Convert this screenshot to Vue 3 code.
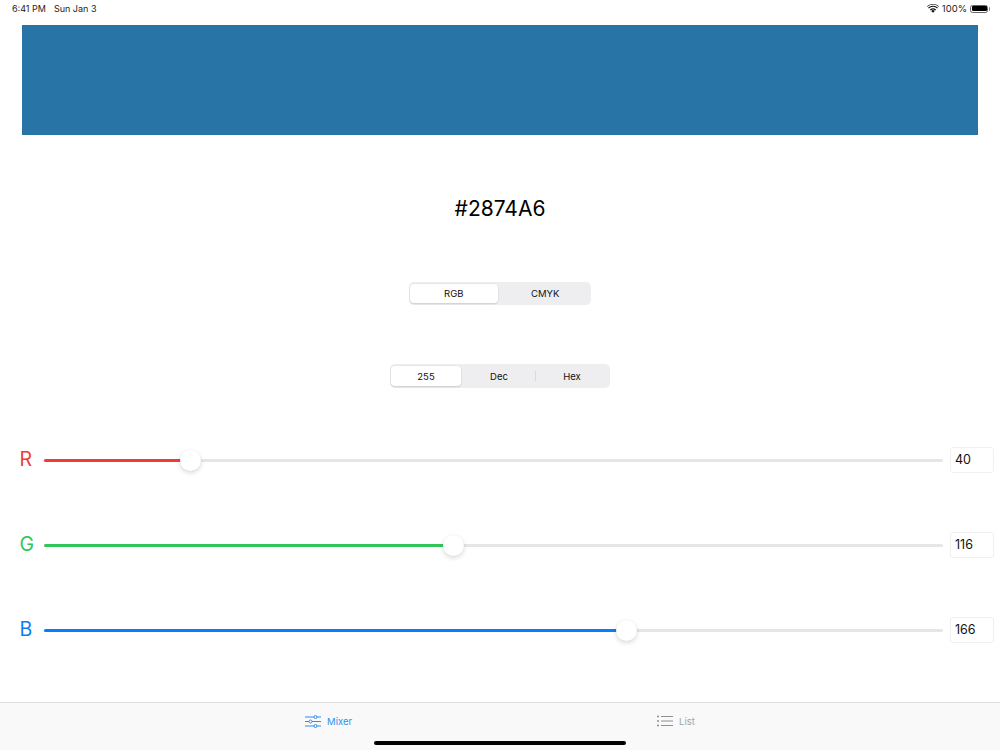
<script setup>
const channels = [
  { name: 'R', value: 40, color: '#f03c37' },
  { name: 'G', value: 116, color: '#34c55a' },
  { name: 'B', value: 166, color: '#0a7cf8' }
]
const fill = (v) => 8.6 + (v / 255) * 882 + 'px'
</script>

<template>
  <div class="page">
    <header class="status">
      <span class="time">6:41 PM</span>
      <span class="date">Sun Jan 3</span>
      <span class="spacer"></span>
      <svg class="wifi" width="12" height="9" viewBox="0 0 12 9">
        <path d="M6 8.8 4.200 6.900a2.600 2.600 0 0 1 3.600 0Z" fill="#111" />
        <path d="M2.900 5.600a4.600 4.600 0 0 1 6.200 0l-.8.8a3.500 3.500 0 0 0-4.600 0Z" fill="#111" />
        <path d="M1 3.700a7.300 7.300 0 0 1 10 0l-.8.8a6.200 6.200 0 0 0-8.400 0Z" fill="#111" />
        <path d="M0 2.300a8.800 8.800 0 0 1 12 0l-.5.5a8 8 0 0 0-11 0Z" fill="#111" />
      </svg>
      <span class="pct">100%</span>
      <span class="battery"><i></i></span>
    </header>

    <div class="swatch"></div>
    <div class="hex">#2874A6</div>

    <div class="seg seg-a">
      <span class="on">RGB</span>
      <span>CMYK</span>
    </div>
    <div class="seg seg-b">
      <span class="on">255</span>
      <span>Dec</span>
      <em></em>
      <span>Hex</span>
    </div>

    <section class="sliders">
      <div v-for="c in channels" :key="c.name" class="row">
        <span class="label" :style="{ color: c.color }">{{ c.name }}</span>
        <div class="track">
          <div class="fill" :style="{ width: fill(c.value), background: c.color }"></div>
          <div class="thumb" :style="{ left: fill(c.value) }"></div>
        </div>
        <div class="num">{{ c.value }}</div>
      </div>
    </section>

    <footer class="tabs">
      <div class="tab active">
        <svg width="16" height="13" viewBox="0 0 16 13" fill="none" stroke="#2e90ea" stroke-width="1">
          <path d="M0 2h16M0 6.500h16M0 11h16" />
          <circle cx="10.500" cy="2" r="1.500" fill="#fff" />
          <circle cx="5.500" cy="6.500" r="1.500" fill="#fff" />
          <circle cx="10.500" cy="11" r="1.500" fill="#fff" />
        </svg>
        <span>Mixer</span>
      </div>
      <div class="tab">
        <svg width="16" height="12" viewBox="0 0 16 12" fill="none" stroke="#8e8e93" stroke-width="1">
          <path d="M4 1.500h12M4 6h12M4 10.500h12" />
          <path d="M0 1.500h2M0 6h2M0 10.500h2" stroke-width="1.600" />
        </svg>
        <span>List</span>
      </div>
      <div class="home"></div>
    </footer>
  </div>
</template>

<style scoped>
.page {
  position: relative;
  width: 1000px;
  height: 750px;
  overflow: hidden;
  background: #fff;
  display: flex;
  flex-direction: column;
  font-family: Inter, "Liberation Sans", sans-serif;
  color: #111;
}
.status {
  height: 25px;
  flex: none;
  display: flex;
  align-items: center;
  padding: 0 12px 8px;
  box-sizing: border-box;
  font-size: 9px;
  color: #222;
}
.date { margin-left: 8px; }
.spacer { flex: 1; }
.pct { margin-left: 3px; font-size: 9.500px; }
.battery {
  position: relative;
  margin-left: 3px;
  width: 18px;
  height: 8px;
  box-sizing: border-box;
  border: 1px solid #666;
  border-radius: 2.500px;
  padding: 0.500px;
  display: block;
}
.battery i {
  display: block;
  height: 100%;
  background: #000;
  border-radius: 1px;
}
.battery::after {
  content: "";
  position: absolute;
  right: -3px;
  top: 1px;
  width: 1.500px;
  height: 4px;
  background: #888;
  border-radius: 0 1px 1px 0;
}
.swatch {
  flex: none;
  height: 110px;
  margin: 0 22px;
  background: #2874a6;
}
.hex {
  flex: none;
  margin-top: 60px;
  height: 27px;
  line-height: 27px;
  text-align: center;
  font-size: 21px;
  color: #000;
}
.seg {
  flex: none;
  align-self: center;
  display: flex;
  align-items: stretch;
  position: relative;
  box-sizing: border-box;
  padding: 2px 1px;
  background: #eeeef0;
  border-radius: 5px;
  font-size: 9.500px;
  font-weight: 400;
  color: #111;
}
.seg span {
  display: flex;
  align-items: center;
  justify-content: center;
  border-radius: 4px;
}
.seg .on {
  background: #fff;
  box-shadow: 0 1px 2px rgba(0, 0, 0, 0.12), 0 0 0 0.500px rgba(0, 0, 0, 0.04);
}
.seg-a {
  margin-top: 60px;
  width: 182px;
  height: 23px;
}
.seg-a span { width: 90px; }
.seg-a .on { width: 88px; margin-right: 3px; }
.seg-b {
  margin-top: 59px;
  width: 220px;
  height: 24px;
}
.seg-b span { width: 72px; }
.seg-b .on { width: 70px; margin-right: 2px; }
.seg-b em {
  width: 1px;
  margin: 5px 0;
  background: #d9d9dd;
}
.sliders {
  flex: none;
  margin-top: 59px;
  display: flex;
  flex-direction: column;
  gap: 59px;
}
.row {
  height: 26px;
  display: flex;
  align-items: center;
  padding-left: 19.500px;
  padding-right: 6px;
}
.label {
  width: 24.500px;
  flex: none;
  font-size: 19.500px;
  font-weight: 400;
  position: relative;
  top: -1px;
}
.track {
  position: relative;
  width: 899px;
  height: 3px;
  flex: none;
  border-radius: 2px;
  background: #e6e6e9;
}
.fill {
  position: absolute;
  left: 0;
  top: 0;
  height: 3px;
  border-radius: 2px;
}
.thumb {
  position: absolute;
  top: 1.500px;
  width: 21px;
  height: 21px;
  margin-left: -10.500px;
  margin-top: -10.500px;
  border-radius: 50%;
  background: #fff;
  box-shadow: 0 2px 5px rgba(0, 0, 0, 0.15), 0 0 1px rgba(0, 0, 0, 0.08);
}
.num {
  flex: none;
  width: 44px;
  height: 26px;
  margin-left: 7px;
  box-sizing: border-box;
  border: 1px solid #f0f0f1;
  border-radius: 3px;
  padding-left: 4px;
  font-size: 12.500px;
  line-height: 23px;
  color: #111;
}
.tabs {
  position: absolute;
  left: 0;
  right: 0;
  bottom: 0;
  height: 48px;
  box-sizing: border-box;
  border-top: 1px solid #dedee0;
  background: #f9f9fa;
  display: flex;
  justify-content: center;
  gap: 305px;
  padding-top: 9px;
}
.tab {
  display: flex;
  align-items: center;
  gap: 6px;
  height: 18px;
  font-size: 9.500px;
  color: #a2a2a6;
}
.tab.active { color: #2e90ea; }
.home {
  position: absolute;
  left: 374px;
  top: 38px;
  width: 252px;
  height: 4px;
  border-radius: 2px;
  background: #000;
}
</style>
